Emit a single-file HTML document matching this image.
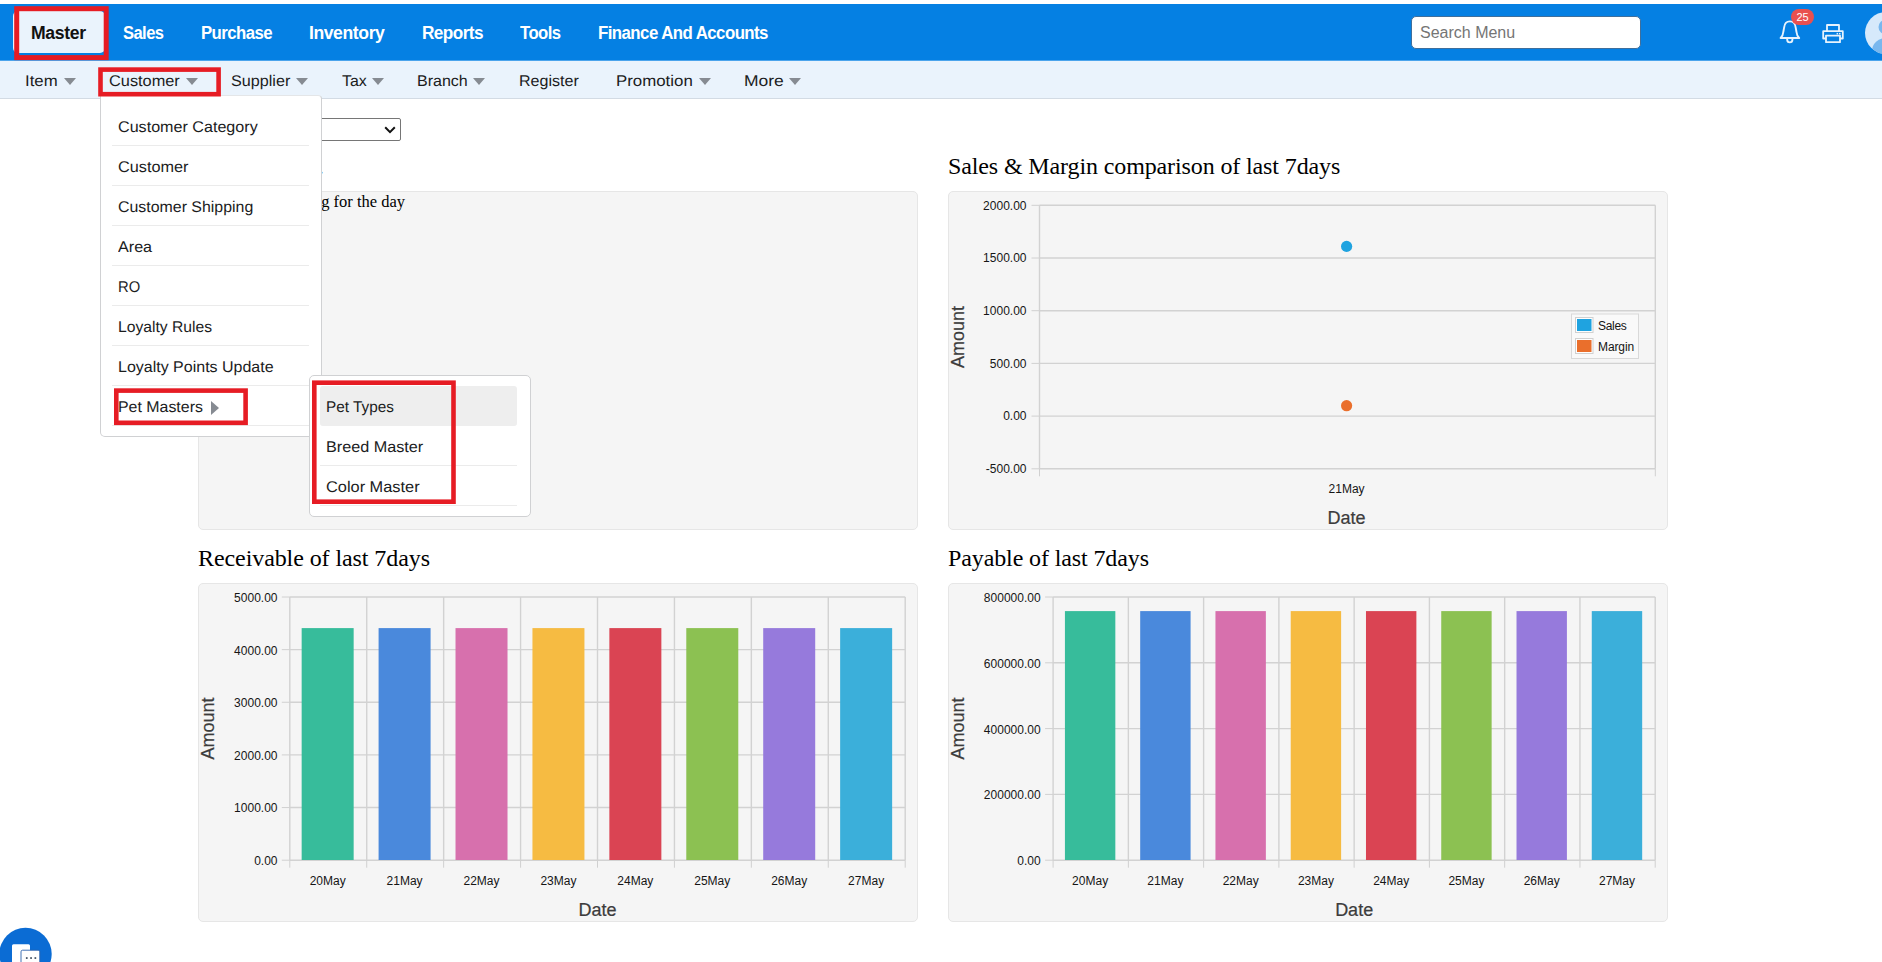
<!DOCTYPE html>
<html lang="en">
<head>
<meta charset="utf-8">
<title>Dashboard</title>
<style>
*{box-sizing:border-box;margin:0;padding:0}
html,body{width:1882px;height:962px;overflow:hidden;background:#fff}
body{position:relative;font-family:"Liberation Sans",sans-serif;color:#1b1c1d}
#topbar{position:absolute;left:0;top:4px;width:1882px;height:56px;background:#0580e3}
#tab-master{position:absolute;left:13px;top:7px;width:92px;height:42px;background:#eaf3fc;border-radius:5px}
.tn{position:absolute;top:18.8px;font-weight:bold;font-size:17.6px;line-height:20px;color:#fff;white-space:nowrap;transform-origin:0 50%}
#search{position:absolute;left:1411px;top:12px;width:230px;height:33px;background:#fff;border:1px solid #3f6f9c;border-radius:5px}
#search span{position:absolute;left:8px;top:6.5px;font-size:16px;line-height:18px;color:#757575}
#badge{position:absolute;left:1791px;top:9px;width:23px;height:16px;border-radius:8px;background:#e9504f;color:#fff;font-size:11px;line-height:16px;text-align:center}
#subbar{position:absolute;left:0;top:60px;width:1882px;height:39px;background:#eaf3fc;border-bottom:1px solid #d3dbe4}
.sn{position:absolute;top:12.4px;font-size:15.5px;line-height:20px;color:#1b1c1d;white-space:nowrap;text-rendering:geometricPrecision;transform-origin:0 50%}
.caret{position:absolute;top:17.5px;width:0;height:0;border-left:6.5px solid transparent;border-right:6.5px solid transparent;border-top:7px solid #868b92}
.h{position:absolute;font-family:"Liberation Serif",serif;font-size:24px;line-height:28px;color:#000;white-space:nowrap}
.panel{position:absolute;background:#f5f5f5;border:1px solid #e6e6e6;border-radius:5px}
#sel{position:absolute;left:240px;top:118px;width:161px;height:23px;background:#fff;border:1px solid #767676;border-radius:2px}
#sel svg{position:absolute;right:4px;top:7px}
#nob{position:absolute;right:1477px;top:191.5px;font-family:"Liberation Serif",serif;font-size:16.5px;line-height:20px;color:#000;white-space:nowrap}
#hdot{position:absolute;right:1558.3px;top:152px;font-family:"Liberation Serif",serif;font-size:24px;line-height:28px;color:#000;white-space:nowrap}
#dd{position:absolute;left:100px;top:95px;width:222px;height:342px;background:#fff;border:1px solid #d0d1d3;border-top-color:#e4e6e8;border-radius:0 4px 5px 5px;z-index:10}
#sub{position:absolute;left:309px;top:375px;width:222px;height:142px;background:#fff;border:1px solid #d0d1d3;border-radius:5px;z-index:11}
.di{position:absolute;left:11px;width:197px;height:40px;border-bottom:1px solid #ebebeb}
.di.hl{background:#eeeeee;border-radius:3px;border-bottom-color:#eeeeee}
.di span{position:absolute;left:6px;top:11.6px;font-size:15.5px;line-height:20px;white-space:nowrap;color:#1b1c1d;text-rendering:geometricPrecision;transform-origin:0 50%}
.rcaret{position:absolute;left:99px;top:14.6px;width:0;height:0;border-top:7px solid transparent;border-bottom:7px solid transparent;border-left:8px solid #868b92}
#sub .di{left:10px;width:197px}
svg text{font-family:"Liberation Sans",sans-serif}
</style>
</head>
<body>
<div id="topbar">
<div id="tab-master"></div>
<span class="tn fit" id="tn0" style="left:30.9px;color:#111;letter-spacing:-0.284px;transform:scaleX(1.0)">Master</span><span class="tn fit" id="tn1" style="left:122.9px;letter-spacing:-0.6px;transform:scaleX(0.9407)">Sales</span><span class="tn fit" id="tn2" style="left:200.9px;letter-spacing:-0.6px;transform:scaleX(0.9531)">Purchase</span><span class="tn fit" id="tn3" style="left:308.9px;letter-spacing:-0.4px;transform:scaleX(1.0)">Inventory</span><span class="tn fit" id="tn4" style="left:421.9px;letter-spacing:-0.6px;transform:scaleX(0.978)">Reports</span><span class="tn fit" id="tn5" style="left:519.9px;letter-spacing:-0.6px;transform:scaleX(0.9489)">Tools</span><span class="tn fit" id="tn6" style="left:597.9px;letter-spacing:-0.6px;transform:scaleX(0.9583)">Finance And Accounts</span>
<div id="search"><span>Search Menu</span></div>
</div>

<svg id="bell" width="26" height="28" viewBox="0 0 26 28" style="position:absolute;left:1776.5px;top:17.6px">
 <path d="M3.6 20C5.2 18.6 6 17.3 6.3 14L7.1 9.6C7.5 5.6 10 3.35 12.9 3.35C15.8 3.35 18.3 5.6 18.7 9.6L19.5 14C19.8 17.3 20.6 18.6 22.2 20Z" fill="none" stroke="#e8f3fd" stroke-width="1.9" stroke-linejoin="round"/>
 <path d="M10.2 20.6v1.2a2.6 2.6 0 0 0 5.2 0v-1.2" fill="none" stroke="#e8f3fd" stroke-width="1.9"/>
</svg>
<div id="badge">25</div>
<svg id="printer" width="24" height="22" viewBox="0 0 24 22" style="position:absolute;left:1821.2px;top:23.2px">
 <g fill="none" stroke="#e8f3fd" stroke-width="1.8" stroke-linejoin="round">
 <path d="M6 8V2h12v6"/>
 <path d="M5 15.5H2.2V8.2h19.6v7.3H19"/>
 <rect x="5" y="12.6" width="14" height="6.6"/>
 </g>
 <rect x="15.6" y="9.9" width="1.5" height="1.5" fill="#e8f3fd"/><rect x="18" y="9.9" width="1.5" height="1.5" fill="#e8f3fd"/>
</svg>
<svg id="avatar" width="44" height="44" viewBox="0 0 44 44" style="position:absolute;left:1864px;top:11.4px">
 <defs><clipPath id="avc"><circle cx="22" cy="22" r="21"/></clipPath></defs>
 <circle cx="22" cy="22" r="21" fill="#d6e9fb"/>
 <g clip-path="url(#avc)" fill="#79b7ee"><circle cx="22" cy="16" r="7.5"/><ellipse cx="22" cy="40" rx="14" ry="13"/></g>
</svg>

<div style="position:absolute;left:0;top:60px;width:1882px;height:1px;background:#4ba4ec;z-index:2"></div>
<div id="subbar"><span class="sn fit" id="sn0" style="left:25.1px;transform:scaleX(1.081)">Item</span><i class="caret" style="left:63.5px"></i><span class="sn fit" id="sn1" style="left:109.1px;transform:scaleX(1.0538)">Customer</span><i class="caret" style="left:185.5px"></i><span class="sn fit" id="sn2" style="left:231.1px;transform:scaleX(1.0426)">Supplier</span><i class="caret" style="left:296px"></i><span class="sn fit" id="sn3" style="left:341.6px;transform:scaleX(1.028)">Tax</span><i class="caret" style="left:371.5px"></i><span class="sn fit" id="sn4" style="left:417.1px;transform:scaleX(1.0341)">Branch</span><i class="caret" style="left:473px"></i><span class="sn fit" id="sn5" style="left:519.1px;transform:scaleX(1.0361)">Register</span><span class="sn fit" id="sn6" style="left:616.1px;transform:scaleX(1.087)">Promotion</span><i class="caret" style="left:698.5px"></i><span class="sn fit" id="sn7" style="left:743.6px;transform:scaleX(1.1266)">More</span><i class="caret" style="left:788.5px"></i></div>
<div id="hdot">Today&#39;s billing.</div>
<div id="sel"><svg width="12" height="8" viewBox="0 0 12 8"><path d="M1.2 1.3L6 6.1l4.8-4.8" fill="none" stroke="#111" stroke-width="2"/></svg></div>
<div class="h fit" id="h1" style="left:948px;top:152px;letter-spacing:-0.12px">Sales &amp; Margin comparison of last 7days</div><div class="h fit" id="h2" style="left:198px;top:544px;letter-spacing:-0.084px">Receivable of last 7days</div><div class="h fit" id="h3" style="left:948px;top:544px;letter-spacing:-0.115px">Payable of last 7days</div>
<div class="panel" style="left:198px;top:191px;width:720px;height:339px"></div>
<div class="panel" style="left:948px;top:191px;width:720px;height:339px"></div>
<div class="panel" style="left:198px;top:583px;width:720px;height:339px"></div>
<div class="panel" style="left:948px;top:583px;width:720px;height:339px"></div>
<div id="nob">There is no billing for the day</div>
<svg id="charts" width="1882" height="962" viewBox="0 0 1882 962" style="position:absolute;left:0;top:0"><g stroke="#d2d2d2" stroke-width="1.4" fill="none"><line x1="1039.5" y1="205.3" x2="1655.3" y2="205.3"/><line x1="1039.5" y1="258" x2="1655.3" y2="258"/><line x1="1039.5" y1="310.7" x2="1655.3" y2="310.7"/><line x1="1039.5" y1="363.4" x2="1655.3" y2="363.4"/><line x1="1039.5" y1="416.1" x2="1655.3" y2="416.1"/><line x1="1039.5" y1="468.8" x2="1655.3" y2="468.8"/><line x1="1039.5" y1="205.3" x2="1039.5" y2="468.8"/><line x1="1655.3" y1="205.3" x2="1655.3" y2="468.8"/></g><g stroke="#d0d0d0" stroke-width="1" fill="none"><line x1="1031.5" y1="205.3" x2="1039.5" y2="205.3"/><line x1="1031.5" y1="258" x2="1039.5" y2="258"/><line x1="1031.5" y1="310.7" x2="1039.5" y2="310.7"/><line x1="1031.5" y1="363.4" x2="1039.5" y2="363.4"/><line x1="1031.5" y1="416.1" x2="1039.5" y2="416.1"/><line x1="1031.5" y1="468.8" x2="1039.5" y2="468.8"/><line x1="1039.5" y1="468.8" x2="1039.5" y2="476.3"/><line x1="1655.3" y1="468.8" x2="1655.3" y2="476.3"/></g><g font-size="12" fill="#151515"><text x="1026.5" y="209.5" text-anchor="end">2000.00</text><text x="1026.5" y="262.2" text-anchor="end">1500.00</text><text x="1026.5" y="314.9" text-anchor="end">1000.00</text><text x="1026.5" y="367.6" text-anchor="end">500.00</text><text x="1026.5" y="420.3" text-anchor="end">0.00</text><text x="1026.5" y="473" text-anchor="end">-500.00</text><text x="1346.6" y="492.6" text-anchor="middle">21May</text></g><g font-size="18" fill="#3c3c3c" stroke="#3c3c3c" stroke-width="0.22"><text x="1346.6" y="523.8" text-anchor="middle">Date</text><text transform="translate(963.6,337.05) rotate(-90)" text-anchor="middle">Amount</text></g><circle cx="1346.6" cy="246.4" r="5.6" fill="#1fa3e0"/><circle cx="1346.6" cy="405.7" r="5.6" fill="#ea6f2c"/><rect x="1571.5" y="314" width="67" height="44.5" fill="#f9f9f9" stroke="#d9d9d9" stroke-width="1"/><rect x="1575.5" y="317.5" width="17.5" height="15" fill="#fdfdfd" stroke="#d0d0d0" stroke-width="1"/><rect x="1577" y="319" width="14.5" height="12" fill="#1fa3e0"/><rect x="1575.5" y="338.5" width="17.5" height="15" fill="#fdfdfd" stroke="#d0d0d0" stroke-width="1"/><rect x="1577" y="340" width="14.5" height="12" fill="#ea6f2c"/><g font-size="12" fill="#151515"><text x="1598" y="329.5" letter-spacing="-0.3">Sales</text><text x="1598" y="350.5" letter-spacing="-0.1">Margin</text></g><g stroke="#d2d2d2" stroke-width="1.4" fill="none"><line x1="289.8" y1="597" x2="905.2" y2="597"/><line x1="289.8" y1="649.64" x2="905.2" y2="649.64"/><line x1="289.8" y1="702.28" x2="905.2" y2="702.28"/><line x1="289.8" y1="754.92" x2="905.2" y2="754.92"/><line x1="289.8" y1="807.56" x2="905.2" y2="807.56"/><line x1="289.8" y1="860.2" x2="905.2" y2="860.2"/><line x1="289.8" y1="597" x2="289.8" y2="860.2"/><line x1="366.73" y1="597" x2="366.73" y2="860.2"/><line x1="443.65" y1="597" x2="443.65" y2="860.2"/><line x1="520.58" y1="597" x2="520.58" y2="860.2"/><line x1="597.5" y1="597" x2="597.5" y2="860.2"/><line x1="674.43" y1="597" x2="674.43" y2="860.2"/><line x1="751.35" y1="597" x2="751.35" y2="860.2"/><line x1="828.28" y1="597" x2="828.28" y2="860.2"/><line x1="905.2" y1="597" x2="905.2" y2="860.2"/></g><g stroke="#d0d0d0" stroke-width="1" fill="none"><line x1="281.8" y1="597" x2="289.8" y2="597"/><line x1="281.8" y1="649.64" x2="289.8" y2="649.64"/><line x1="281.8" y1="702.28" x2="289.8" y2="702.28"/><line x1="281.8" y1="754.92" x2="289.8" y2="754.92"/><line x1="281.8" y1="807.56" x2="289.8" y2="807.56"/><line x1="281.8" y1="860.2" x2="289.8" y2="860.2"/><line x1="289.8" y1="860.2" x2="289.8" y2="867.7"/><line x1="366.73" y1="860.2" x2="366.73" y2="867.7"/><line x1="443.65" y1="860.2" x2="443.65" y2="867.7"/><line x1="520.58" y1="860.2" x2="520.58" y2="867.7"/><line x1="597.5" y1="860.2" x2="597.5" y2="867.7"/><line x1="674.43" y1="860.2" x2="674.43" y2="867.7"/><line x1="751.35" y1="860.2" x2="751.35" y2="867.7"/><line x1="828.28" y1="860.2" x2="828.28" y2="867.7"/><line x1="905.2" y1="860.2" x2="905.2" y2="867.7"/></g><g font-size="12" fill="#151515"><text x="277.5" y="601.9" text-anchor="end">5000.00</text><text x="277.5" y="654.54" text-anchor="end">4000.00</text><text x="277.5" y="707.18" text-anchor="end">3000.00</text><text x="277.5" y="759.82" text-anchor="end">2000.00</text><text x="277.5" y="812.46" text-anchor="end">1000.00</text><text x="277.5" y="865.1" text-anchor="end">0.00</text><text x="327.66" y="884.5" text-anchor="middle">20May</text><text x="404.59" y="884.5" text-anchor="middle">21May</text><text x="481.51" y="884.5" text-anchor="middle">22May</text><text x="558.44" y="884.5" text-anchor="middle">23May</text><text x="635.36" y="884.5" text-anchor="middle">24May</text><text x="712.29" y="884.5" text-anchor="middle">25May</text><text x="789.21" y="884.5" text-anchor="middle">26May</text><text x="866.14" y="884.5" text-anchor="middle">27May</text></g><g font-size="18" fill="#3c3c3c" stroke="#3c3c3c" stroke-width="0.22"><text x="597.5" y="915.6" text-anchor="middle">Date</text><text transform="translate(213.6,728.6) rotate(-90)" text-anchor="middle">Amount</text></g><rect x="301.66" y="628.1" width="52" height="231.9" fill="#37bc9b"/><rect x="378.59" y="628.1" width="52" height="231.9" fill="#4a89dc"/><rect x="455.51" y="628.1" width="52" height="231.9" fill="#d770ad"/><rect x="532.44" y="628.1" width="52" height="231.9" fill="#f6bb42"/><rect x="609.36" y="628.1" width="52" height="231.9" fill="#da4453"/><rect x="686.29" y="628.1" width="52" height="231.9" fill="#8cc152"/><rect x="763.21" y="628.1" width="52" height="231.9" fill="#967adc"/><rect x="840.14" y="628.1" width="52" height="231.9" fill="#3bafda"/><g stroke="#d2d2d2" stroke-width="1.4" fill="none"><line x1="1053.1" y1="597" x2="1655.2" y2="597"/><line x1="1053.1" y1="662.8" x2="1655.2" y2="662.8"/><line x1="1053.1" y1="728.6" x2="1655.2" y2="728.6"/><line x1="1053.1" y1="794.4" x2="1655.2" y2="794.4"/><line x1="1053.1" y1="860.2" x2="1655.2" y2="860.2"/><line x1="1053.1" y1="597" x2="1053.1" y2="860.2"/><line x1="1128.36" y1="597" x2="1128.36" y2="860.2"/><line x1="1203.62" y1="597" x2="1203.62" y2="860.2"/><line x1="1278.89" y1="597" x2="1278.89" y2="860.2"/><line x1="1354.15" y1="597" x2="1354.15" y2="860.2"/><line x1="1429.41" y1="597" x2="1429.41" y2="860.2"/><line x1="1504.67" y1="597" x2="1504.67" y2="860.2"/><line x1="1579.94" y1="597" x2="1579.94" y2="860.2"/><line x1="1655.2" y1="597" x2="1655.2" y2="860.2"/></g><g stroke="#d0d0d0" stroke-width="1" fill="none"><line x1="1045.1" y1="597" x2="1053.1" y2="597"/><line x1="1045.1" y1="662.8" x2="1053.1" y2="662.8"/><line x1="1045.1" y1="728.6" x2="1053.1" y2="728.6"/><line x1="1045.1" y1="794.4" x2="1053.1" y2="794.4"/><line x1="1045.1" y1="860.2" x2="1053.1" y2="860.2"/><line x1="1053.1" y1="860.2" x2="1053.1" y2="867.7"/><line x1="1128.36" y1="860.2" x2="1128.36" y2="867.7"/><line x1="1203.62" y1="860.2" x2="1203.62" y2="867.7"/><line x1="1278.89" y1="860.2" x2="1278.89" y2="867.7"/><line x1="1354.15" y1="860.2" x2="1354.15" y2="867.7"/><line x1="1429.41" y1="860.2" x2="1429.41" y2="867.7"/><line x1="1504.67" y1="860.2" x2="1504.67" y2="867.7"/><line x1="1579.94" y1="860.2" x2="1579.94" y2="867.7"/><line x1="1655.2" y1="860.2" x2="1655.2" y2="867.7"/></g><g font-size="12" fill="#151515"><text x="1040.6" y="601.9" text-anchor="end">800000.00</text><text x="1040.6" y="667.7" text-anchor="end">600000.00</text><text x="1040.6" y="733.5" text-anchor="end">400000.00</text><text x="1040.6" y="799.3" text-anchor="end">200000.00</text><text x="1040.6" y="865.1" text-anchor="end">0.00</text><text x="1090.13" y="884.5" text-anchor="middle">20May</text><text x="1165.39" y="884.5" text-anchor="middle">21May</text><text x="1240.66" y="884.5" text-anchor="middle">22May</text><text x="1315.92" y="884.5" text-anchor="middle">23May</text><text x="1391.18" y="884.5" text-anchor="middle">24May</text><text x="1466.44" y="884.5" text-anchor="middle">25May</text><text x="1541.71" y="884.5" text-anchor="middle">26May</text><text x="1616.97" y="884.5" text-anchor="middle">27May</text></g><g font-size="18" fill="#3c3c3c" stroke="#3c3c3c" stroke-width="0.22"><text x="1354.15" y="915.6" text-anchor="middle">Date</text><text transform="translate(963.6,728.6) rotate(-90)" text-anchor="middle">Amount</text></g><rect x="1064.93" y="611.1" width="50.4" height="248.9" fill="#37bc9b"/><rect x="1140.19" y="611.1" width="50.4" height="248.9" fill="#4a89dc"/><rect x="1215.46" y="611.1" width="50.4" height="248.9" fill="#d770ad"/><rect x="1290.72" y="611.1" width="50.4" height="248.9" fill="#f6bb42"/><rect x="1365.98" y="611.1" width="50.4" height="248.9" fill="#da4453"/><rect x="1441.24" y="611.1" width="50.4" height="248.9" fill="#8cc152"/><rect x="1516.51" y="611.1" width="50.4" height="248.9" fill="#967adc"/><rect x="1591.77" y="611.1" width="50.4" height="248.9" fill="#3bafda"/></svg>
<div id="dd"><div class="di" style="top:10px"><span class="fit" id="dd0" style="transform:scaleX(1.0395)">Customer Category</span></div><div class="di" style="top:50px"><span class="fit" id="dd1" style="transform:scaleX(1.0478)">Customer</span></div><div class="di" style="top:90px"><span class="fit" id="dd2" style="transform:scaleX(1.0263)">Customer Shipping</span></div><div class="di" style="top:130px"><span class="fit" id="dd3" style="transform:scaleX(1.0412)">Area</span></div><div class="di" style="top:170px"><span class="fit" id="dd4" style="transform:scaleX(0.9548)">RO</span></div><div class="di" style="top:210px"><span class="fit" id="dd5" style="transform:scaleX(1.0113)">Loyalty Rules</span></div><div class="di" style="top:250px"><span class="fit" id="dd6" style="transform:scaleX(1.0319)">Loyalty Points Update</span></div><div class="di" style="top:290px"><span class="fit" id="dd7" style="transform:scaleX(1.0266)">Pet Masters</span><i class="rcaret"></i></div></div>
<div id="sub"><div class="di hl" style="top:10px"><span class="fit" id="sm0" style="transform:scaleX(0.989)">Pet Types</span></div><div class="di" style="top:50px"><span class="fit" id="sm1" style="transform:scaleX(1.0446)">Breed Master</span></div><div class="di" style="top:90px"><span class="fit" id="sm2" style="transform:scaleX(1.055)">Color Master</span></div></div>
<svg id="red" width="1882" height="962" viewBox="0 0 1882 962" style="position:absolute;left:0;top:0;z-index:50;pointer-events:none"><g fill="none" stroke="#e61c24" stroke-width="4.6"><rect x="16.7" y="8.7" width="89.5" height="48.9" stroke-width="5"/><rect x="100.5" y="69.6" width="118.1" height="24.6"/><rect x="116.3" y="390.6" width="129.3" height="32.2"/><rect x="314.3" y="382.7" width="139.2" height="119"/></g></svg>

<svg id="chat" width="54" height="40" viewBox="0 0 54 40" style="position:absolute;left:-1px;top:926px">
 <circle cx="26.5" cy="28" r="26.2" fill="#0b6cd4"/>
 <path d="M14.5 18.3h15a1.5 1.5 0 0 1 1.5 1.5V40H13V19.8a1.5 1.5 0 0 1 1.5-1.5z" fill="#fff"/>
 <path d="M23.6 24.2h15.6a1.6 1.6 0 0 1 1.6 1.6V40H22V25.8a1.6 1.6 0 0 1 1.6-1.6z" fill="#fff" stroke="#2a62ad" stroke-width="0.9"/>
 <path d="M13 40l3.5-3.5H22V40z" fill="#0b6cd4"/>
 <g fill="#3a4a5c"><rect x="26.9" y="31.2" width="1.7" height="1.7"/><rect x="31.2" y="31.2" width="1.7" height="1.7"/><rect x="35.5" y="31.2" width="1.7" height="1.7"/></g>
</svg>

</body>
</html>
